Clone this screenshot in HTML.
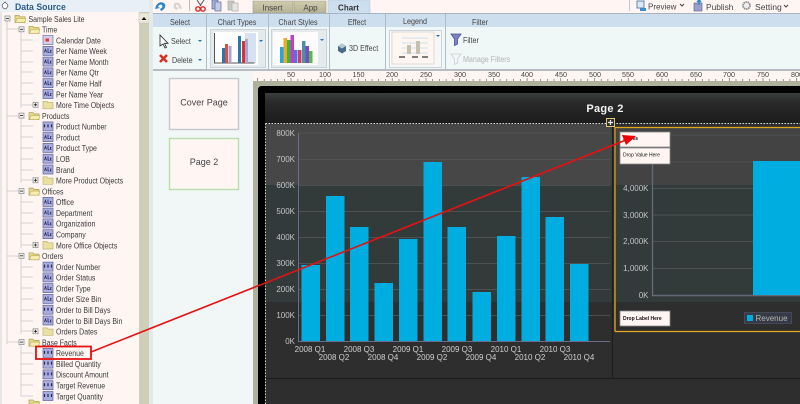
<!DOCTYPE html>
<html><head><meta charset="utf-8"><style>
html,body{margin:0;padding:0;background:#fff;width:800px;height:404px;overflow:hidden}
svg{display:block;font-family:"Liberation Sans",sans-serif;filter:blur(.25px)}
.t text{font-size:8.2px;fill:#3a3a3a}
.h{font-size:8.5px;fill:#444;text-anchor:middle}
.b{font-size:8.4px;fill:#444}
.r{font-size:7.2px;fill:#444;text-anchor:middle}
.y{font-size:8px;fill:#c4c4c4;text-anchor:end}
.x{font-size:8px;fill:#d0d0d0;text-anchor:middle}
.d{font-size:5px;fill:#111;font-weight:bold}
</style></head><body>
<svg width="800" height="404" viewBox="0 0 800 404" xmlns="http://www.w3.org/2000/svg">
<defs>
<g id="abc"><rect x="0" y="-4.500" width="10" height="9" fill="#a9aedd" stroke="#5d6399" stroke-width=".7"/><path d="M1.500 1.500l1-3 1 3M5 -2.500v4h1.500M8.500 -.5h-1v2h1" stroke="#23275e" stroke-width=".8" fill="none"/></g>
<g id="num"><rect x="0" y="-4.500" width="10" height="9" fill="#a9aedd" stroke="#5d6399" stroke-width=".7"/><path d="M1.500 -2v3M5 -2v3M8.500 -2v3" stroke="#23275e" stroke-width="1.200"/></g>
<g id="fo"><path d="M0 -3h4l1 1.300h5v5.700h-10z" fill="#e4d98c" stroke="#b0a050" stroke-width=".7"/><path d="M.5 4l1.500-4h9l-1.500 4z" fill="#f6eeb0" stroke="#b0a050" stroke-width=".5"/></g>
<g id="fc"><path d="M0 -3.500h4l1 1.300h5v6.200h-10z" fill="#e9e1a2" stroke="#bdb070" stroke-width=".7"/></g>
<g id="mi"><rect x="0" y="-2.500" width="5" height="5" fill="#f2f0ea" stroke="#888" stroke-width=".7"/><path d="M1 0h3" stroke="#222" stroke-width=".8"/></g>
<g id="pl"><rect x="0" y="-2.500" width="5" height="5" fill="#f2f0ea" stroke="#888" stroke-width=".7"/><path d="M1 0h3M2.500 -1.500v3" stroke="#222" stroke-width=".8"/></g>
<linearGradient id="hd" x1="0" y1="0" x2="0" y2="1"><stop offset="0" stop-color="#3a3f3f"/><stop offset=".3" stop-color="#2a2a2a"/><stop offset="1" stop-color="#1c1c1c"/></linearGradient>
<linearGradient id="tab" x1="0" y1="0" x2="0" y2="1"><stop offset="0" stop-color="#cfccae"/><stop offset="1" stop-color="#b6b396"/></linearGradient>
</defs>

<!-- base -->
<rect width="800" height="404" fill="#f0f6f6"/>

<!-- left panel -->
<rect x="0" y="0" width="150" height="12" fill="#e9eff6"/>
<path d="M2 5l3-3 2 2 1 2-2 3-3-1z" fill="#fff" stroke="#555" stroke-width=".7"/>
<g transform="scale(.92 1)"><text x="16.300" y="10" font-size="9.500" font-weight="bold" fill="#2b5d8c">Data Source</text></g>
<rect x="0" y="12" width="139" height="392" fill="#fff6f4"/>
<rect x="0" y="12" width="2" height="392" fill="#e6e6e6"/>
<rect x="139" y="12" width="10" height="392" fill="#cfd0bb"/>
<rect x="139" y="13" width="10" height="10" fill="#ece9d8" stroke="#bbb" stroke-width=".5"/>
<path d="M141.500 20l2.500-3 2.500 3z" fill="#111"/>
<rect x="149" y="0" width="4" height="404" fill="#e4e9ec"/>

<path d="M7 21V344M21 32V108M21 118V183M21 194V248M21 258V334M21 345V396M21 40h12M21 51h12M21 62h12M21 72h12M21 83h12M21 94h12M21 105h12M21 126h12M21 137h12M21 148h12M21 159h12M21 170h12M21 180h12M21 202h12M21 213h12M21 223h12M21 234h12M21 245h12M21 267h12M21 277h12M21 288h12M21 299h12M21 310h12M21 321h12M21 331h12M21 353h12M21 364h12M21 374h12M21 385h12M21 396h12M7 29h12M7 116h12M7 191h12M7 256h12M7 342h12" stroke="#c8c8c8" stroke-width=".8" fill="none"/>

<use href="#mi" x="5" y="18.500"/><use href="#fo" x="15" y="18.500"/>
<use href="#mi" x="19" y="29.300"/><use href="#fo" x="29" y="29.300"/>
<use href="#mi" x="19" y="115.600"/><use href="#fo" x="29" y="115.600"/>
<use href="#mi" x="19" y="191.100"/><use href="#fo" x="29" y="191.100"/>
<use href="#mi" x="19" y="255.800"/><use href="#fo" x="29" y="255.800"/>
<use href="#mi" x="19" y="342.100"/><use href="#fo" x="29" y="342.100"/>
<use href="#pl" x="33" y="104.800"/><use href="#fc" x="43" y="104.800"/>
<use href="#pl" x="33" y="180.300"/><use href="#fc" x="43" y="180.300"/>
<use href="#pl" x="33" y="245"/><use href="#fc" x="43" y="245"/>
<use href="#pl" x="33" y="331.300"/><use href="#fc" x="43" y="331.300"/>
<use href="#fo" x="29" y="403"/>

<rect x="43" y="35.500" width="10" height="9" fill="#cfd0e6" stroke="#5d6399" stroke-width=".6"/><rect x="45.500" y="38.500" width="3.500" height="3" fill="#e33"/>
<use href="#abc" x="43" y="50.900"/><use href="#abc" x="43" y="61.600"/><use href="#abc" x="43" y="72.400"/><use href="#abc" x="43" y="83.200"/><use href="#abc" x="43" y="94"/>
<use href="#num" x="43" y="126.400"/><use href="#abc" x="43" y="137.100"/><use href="#abc" x="43" y="147.900"/><use href="#abc" x="43" y="158.700"/><use href="#abc" x="43" y="169.500"/>
<use href="#abc" x="43" y="201.900"/><use href="#abc" x="43" y="212.600"/><use href="#abc" x="43" y="223.400"/><use href="#abc" x="43" y="234.200"/>
<use href="#num" x="43" y="266.600"/><use href="#abc" x="43" y="277.400"/><use href="#abc" x="43" y="288.100"/><use href="#abc" x="43" y="298.900"/><use href="#num" x="43" y="309.700"/><use href="#abc" x="43" y="320.500"/>
<use href="#num" x="43" y="352.900"/><use href="#num" x="43" y="363.600"/><use href="#num" x="43" y="374.400"/><use href="#num" x="43" y="385.200"/><use href="#num" x="43" y="396"/>

<g class="t" transform="scale(.85 1)">
<text x="33.530" y="21.800">Sample Sales Lite</text>
<text x="49.410" y="32.600">Time</text>
<text x="65.880" y="43.400">Calendar Date</text>
<text x="65.880" y="54.200">Per Name Week</text>
<text x="65.880" y="64.900">Per Name Month</text>
<text x="65.880" y="75.700">Per Name Qtr</text>
<text x="65.880" y="86.500">Per Name Half</text>
<text x="65.880" y="97.300">Per Name Year</text>
<text x="65.880" y="108.100">More Time Objects</text>
<text x="49.410" y="118.900">Products</text>
<text x="65.880" y="129.700">Product Number</text>
<text x="65.880" y="140.400">Product</text>
<text x="65.880" y="151.200">Product Type</text>
<text x="65.880" y="162">LOB</text>
<text x="65.880" y="172.800">Brand</text>
<text x="65.880" y="183.600">More Product Objects</text>
<text x="49.410" y="194.400">Offices</text>
<text x="65.880" y="205.200">Office</text>
<text x="65.880" y="215.900">Department</text>
<text x="65.880" y="226.700">Organization</text>
<text x="65.880" y="237.500">Company</text>
<text x="65.880" y="248.300">More Office Objects</text>
<text x="49.410" y="259.100">Orders</text>
<text x="65.880" y="269.900">Order Number</text>
<text x="65.880" y="280.700">Order Status</text>
<text x="65.880" y="291.400">Order Type</text>
<text x="65.880" y="302.200">Order Size Bin</text>
<text x="65.880" y="313">Order to Bill Days</text>
<text x="65.880" y="323.800">Order to Bill Days Bin</text>
<text x="65.880" y="334.600">Orders Dates</text>
<text x="49.410" y="345.400">Base Facts</text>
<text x="65.880" y="356.200">Revenue</text>
<text x="65.880" y="366.900">Billed Quantity</text>
<text x="65.880" y="377.700">Discount Amount</text>
<text x="65.880" y="388.500">Target Revenue</text>
<text x="65.880" y="399.300">Target Quantity</text>
</g>

<!-- top bar -->
<rect x="153" y="0" width="647" height="13" fill="#fff5f3"/>
<path d="M156 6c2-4 6-5 9-2 1 3-1 6-4 7l-1-2c2-1 3-2 2-4-2-1-3 0-4 2l2 1-5 1z" fill="#2a86c8"/>
<path d="M181 6c-2-4-5-4-7-2-1 3 0 5 3 6l1-2c-2-1-2-2-2-3 2-1 2 0 3 2l-1 1 4 1z" fill="#d5d5d0"/>
<path d="M189.500 0v11" stroke="#bbb"/>
<path d="M197 0l4 6M204 0l-4 6" stroke="#555" stroke-width="1"/><circle cx="198" cy="9" r="2.200" fill="none" stroke="#d22" stroke-width="1.400"/><circle cx="203" cy="9" r="2.200" fill="none" stroke="#d22" stroke-width="1.400"/>
<rect x="212" y="0" width="6" height="9" fill="#a5b1d6" stroke="#5f6a9a" stroke-width=".7"/><rect x="215" y="2" width="6" height="9" fill="#c2cbe6" stroke="#5f6a9a" stroke-width=".7"/>
<rect x="228" y="1" width="6" height="9" fill="#c8c8c4" stroke="#aaa" stroke-width=".7"/><rect x="232" y="3" width="6" height="8" fill="#e6e6e2" stroke="#aaa" stroke-width=".7"/>

<path d="M253 13V1h40v12z" fill="url(#tab)" stroke="#9c9c8c" stroke-width=".6"/>
<path d="M294 13V1h32v12z" fill="url(#tab)" stroke="#9c9c8c" stroke-width=".6"/>
<path d="M328 14V0h42v14z" fill="#cddeee" stroke="#b8c8d8" stroke-width=".6"/>
<text x="272.500" y="10.500" text-anchor="middle" style="font-size:8px;fill:#444">Insert</text>
<text x="310.500" y="10.500" text-anchor="middle" style="font-size:8px;fill:#444">App</text>
<text x="348.500" y="10.500" text-anchor="middle" font-weight="bold" style="font-size:8px;fill:#333">Chart</text>

<path d="M629.500 0v11" stroke="#c0c8d8"/>
<rect x="637" y="1" width="7" height="7" fill="#dfe8f2" stroke="#3a6ea5" stroke-width=".8"/><path d="M640 8h6v3h-6z" fill="#3a8ed0"/>
<text x="648" y="9.500" class="b" style="font-size:8px">Preview</text><path d="M680 4l2 2 2-2" stroke="#444" fill="none"/>
<rect x="694" y="3" width="8" height="8" fill="#9aa0cc" stroke="#555f90" stroke-width=".6"/><path d="M699 5V0M697 2l2-2 2 2" stroke="#2a86c8" stroke-width="1.400" fill="none"/>
<text x="706" y="10" class="b" style="font-size:8.400px">Publish</text>
<circle cx="746.500" cy="5.500" r="3.500" fill="#eee" stroke="#888" stroke-width="1.800" stroke-dasharray="1.500 .7"/>
<text x="755" y="10" class="b" style="font-size:8.600px">Setting</text><path d="M784 5l2 2 2-2" stroke="#444" fill="none"/>

<!-- ribbon -->
<rect x="153" y="13" width="647" height="1" fill="#a8b4c0"/>
<rect x="153" y="14" width="647" height="13" fill="#cddeee"/>
<rect x="153" y="27" width="647" height="42" fill="#eff8f7"/>
<rect x="153" y="69" width="647" height="2" fill="#b6bcc2"/>
<path d="M206.500 14v55M268.500 14v55M329.500 14v55M385.500 14v55M445.500 14v55" stroke="#b1bcc6" stroke-width="1"/>
<g transform="scale(.85 1)">
<text x="211.760" y="25" class="h">Select</text>
<text x="278.820" y="25" class="h">Chart Types</text>
<text x="350.590" y="25" class="h">Chart Styles</text>
<text x="420" y="25" class="h">Effect</text>
<text x="488.240" y="24" class="h">Legend</text>
<text x="564.700" y="25" class="h">Filter</text>
<text x="201.180" y="44" class="b">Select</text>
<text x="202.350" y="63" class="b">Delete</text>
<text x="410.590" y="51" class="b">3D Effect</text>
<text x="544.710" y="43" class="b">Filter</text>
<text x="544.710" y="62" class="b" style="fill:#b0b4b4">Manage Filters</text>
</g>

<path d="M160 35v11l3-2 2 4 1.500-.7-2-4h3.500z" fill="#fff" stroke="#222" stroke-width=".8"/>
<path d="M198 40h4l-2 2z" fill="#2a6fb0"/>
<path d="M160 55l7 7M167 55l-7 7" stroke="#d9331f" stroke-width="2.600"/>
<path d="M198 59h4l-2 2z" fill="#2a6fb0"/>

<!-- chart types gallery -->
<rect x="210.500" y="29.500" width="55" height="38" fill="#e4eaed" stroke="#ccd3d8"/>
<rect x="214" y="32" width="44" height="33" fill="#fff"/>
<rect x="245" y="33" width="11" height="30" fill="#d6e2f2"/>
<path d="M214.500 33v30h40" stroke="#555" fill="none"/>
<rect x="222" y="48" width="3" height="15" fill="#2578b0"/><rect x="225" y="44" width="3" height="19" fill="#d9533f"/><rect x="228.500" y="46" width="3" height="17" fill="#a6a6d6"/>
<rect x="238" y="36" width="3" height="27" fill="#2578b0"/><rect x="242" y="41" width="3" height="22" fill="#d9332f"/><rect x="245" y="39" width="3" height="24" fill="#a6a6d6"/>
<path d="M259 40h4l-2 2z" fill="#2a6fb0"/>

<rect x="271.500" y="29.500" width="55" height="38" fill="#e4eaed" stroke="#ccd3d8"/>
<rect x="273" y="32" width="45" height="33" fill="#fdfbfb"/>
<rect x="280" y="47" width="3.500" height="16" fill="#22a5e0"/><rect x="283.500" y="38" width="3.500" height="25" fill="#f2a820"/><rect x="287" y="40" width="3.500" height="23" fill="#3bb53b"/><rect x="290.500" y="35" width="3.500" height="28" fill="#c23ec8"/><rect x="294" y="50" width="3.500" height="13" fill="#5a6fd8"/><rect x="298" y="50" width="3.500" height="13" fill="#c8406a"/><rect x="302" y="41" width="3.500" height="22" fill="#4a90a8"/><rect x="305.500" y="46" width="3.500" height="17" fill="#7a4ac0"/><rect x="309" y="51" width="3.500" height="12" fill="#5cb84c"/>
<path d="M320 39h4l-2 2z" fill="#2a6fb0"/>

<path d="M338 46l4-2.500 4 2.500v5l-4 2.500-4-2.500z" fill="#4a6a8a"/><path d="M338 46l4-2.500 4 2.500-4 2.500z" fill="#b5c8d8"/>

<rect x="389.500" y="30.500" width="52" height="37" fill="#f6f8f8" stroke="#ccd3d8"/>
<rect x="392" y="32" width="42" height="32" fill="#fff6f2" stroke="#dcdcd8"/>
<path d="M402 38h26M402 43h26M402 48h26M402 53h26" stroke="#cfe0ee" stroke-width="1"/>
<rect x="407" y="45" width="4" height="9" fill="#c8c0aa"/><rect x="416" y="41" width="4" height="13" fill="#c8c0aa"/>
<path d="M399 57h6M412 57h6M422 57h6" stroke="#333" stroke-width="1.200"/>
<path d="M436 35h4l-2 2z" fill="#2a6fb0"/>

<path d="M451 34h10l-3.500 5v5l-3 1.500v-6.500z" fill="#7d82c2" stroke="#4c5190" stroke-width=".8"/>
<path d="M451 54h10l-3.500 5v4l-3 1.500v-5.500z" fill="#f4f8f6" stroke="#c8cece" stroke-width=".8"/>

<!-- page panel -->
<rect x="153" y="71" width="100" height="333" fill="#f1f6f6"/>
<rect x="169.500" y="78.500" width="69" height="51" fill="#fff6f4" stroke="#c4c8cc" stroke-width="1.400"/>
<text x="204" y="105.500" text-anchor="middle" font-size="9" fill="#444">Cover Page</text>
<rect x="169.500" y="138.500" width="69" height="51" fill="#fff6f4" stroke="#b5e0ae" stroke-width="1.400"/>
<text x="204" y="165" text-anchor="middle" font-size="9" fill="#444">Page 2</text>

<!-- ruler -->
<rect x="253" y="71" width="547" height="10" fill="#fff6f4"/>
<path d="M257.500 78v3M264.200 79v2M271 79v2M277.700 79v2M284.400 79v2M291 78v3M297.900 79v2M304.600 79v2M311.300 79v2M318 79v2M324.900 78v3M331.500 79v2M338.300 79v2M345 79v2M351.800 79v2M358.500 78v3M365.300 79v2M372 79v2M378.700 79v2M385.500 79v2M392.200 78v3M399 79v2M405.700 79v2M412.400 79v2M419.200 79v2M426 78v3M432.700 79v2M439.400 79v2M446.100 79v2M452.900 79v2M459.700 78v3M466.400 79v2M473.100 79v2M479.900 79v2M486.600 79v2M493.400 78v3M500.100 79v2M506.800 79v2M513.600 79v2M520.300 79v2M527.100 78v3M533.800 79v2M540.500 79v2M547.300 79v2M554 79v2M560.800 78v3M567.500 79v2M574.200 79v2M581 79v2M587.700 79v2M594.500 78v3M601.200 79v2M607.900 79v2M614.700 79v2M621.400 79v2M628.200 78v3M634.900 79v2M641.600 79v2M648.400 79v2M655.100 79v2M661.900 78v3M668.600 79v2M675.300 79v2M682.100 79v2M688.800 79v2M695.600 78v3M702.300 79v2M709 79v2M715.800 79v2M722.500 79v2M729.300 78v3M736 79v2M742.700 79v2M749.500 79v2M756.200 79v2M763 78v3M769.700 79v2M776.400 79v2M783.200 79v2M789.900 79v2M796.700 78v3" stroke="#666" stroke-width=".7"/>
<g class="r"><text x="291" y="77">50</text><text x="325" y="77">100</text><text x="358.500" y="77">150</text><text x="392" y="77">200</text><text x="426" y="77">250</text><text x="460" y="77">300</text><text x="494" y="77">350</text><text x="527" y="77">400</text><text x="561" y="77">450</text><text x="595" y="77">500</text><text x="628" y="77">550</text><text x="662" y="77">600</text><text x="696" y="77">650</text><text x="729" y="77">700</text><text x="763" y="77">750</text><text x="797" y="77">800</text></g>

<!-- stage -->
<rect x="253" y="81" width="547" height="323" fill="#aeb29c"/>
<path d="M800 86H262q-4 0-4 4V404H800z" fill="#000"/>
<rect x="265" y="93" width="535" height="311" fill="#2e2e2e"/>
<rect x="265" y="93" width="535" height="30" fill="url(#hd)"/>
<text x="605" y="112" text-anchor="middle" font-size="11" font-weight="bold" fill="#f2f2f2" letter-spacing=".3">Page 2</text>

<!-- chart 1 bg -->
<rect x="266" y="124" width="346" height="61" fill="#474747"/>
<rect x="266" y="185" width="346" height="117" fill="#323a3a"/>
<rect x="266" y="302" width="346" height="76" fill="#2e2e2e"/>
<path d="M265.500 123.500H800" stroke="#ddd" stroke-dasharray="1.500 1.500" stroke-width="1"/>
<path d="M265.500 123.500V404" stroke="#ccc" stroke-dasharray="1.500 1.500" stroke-width="1"/>
<path d="M266 378.500H800M612.500 124V378" stroke="#1e1e1e" stroke-width="1.200"/>

<path d="M298 133H610M298 159.500H610M298 185.500H610M298 211.500H610M298 237.500H610M298 263.500H610M298 289.500H610M298 315.500H610" stroke="#555a5a" stroke-width=".8"/>
<path d="M298.500 133V341.500H610" stroke="#6a6d8a" stroke-width="1" fill="none"/>
<g fill="#00ade0">
<rect x="301.500" y="265" width="18.500" height="76"/>
<rect x="326" y="196" width="18.500" height="145"/>
<rect x="350" y="227" width="18.500" height="114"/>
<rect x="374.500" y="283" width="18.500" height="58"/>
<rect x="399" y="239" width="18.500" height="102"/>
<rect x="423.500" y="162" width="18.500" height="179"/>
<rect x="447.500" y="227" width="18.500" height="114"/>
<rect x="472.500" y="292" width="18.500" height="49"/>
<rect x="497" y="236" width="18.500" height="105"/>
<rect x="521.500" y="177" width="18.500" height="164"/>
<rect x="545.500" y="217" width="18.500" height="124"/>
<rect x="570" y="264" width="18.500" height="77"/>
</g>
<g class="y">
<text x="295" y="136">800K</text><text x="295" y="162">700K</text><text x="295" y="188">600K</text><text x="295" y="214">500K</text><text x="295" y="240">400K</text><text x="295" y="266">300K</text><text x="295" y="292">200K</text><text x="295" y="318">100K</text><text x="295" y="344">0K</text>
</g>
<g class="x">
<text x="310" y="352">2008 Q1</text><text x="334" y="360">2008 Q2</text>
<text x="359" y="352">2008 Q3</text><text x="383" y="360">2008 Q4</text>
<text x="408" y="352">2009 Q1</text><text x="432" y="360">2009 Q2</text>
<text x="457" y="352">2009 Q3</text><text x="481" y="360">2009 Q4</text>
<text x="506" y="352">2010 Q1</text><text x="530" y="360">2010 Q2</text>
<text x="555" y="352">2010 Q3</text><text x="579" y="360">2010 Q4</text>
</g>

<!-- chart 2 -->
<rect x="616" y="128" width="184" height="57" fill="#434343"/>
<rect x="616" y="185" width="184" height="117" fill="#323a3a"/>
<rect x="616" y="302" width="184" height="29" fill="#2e2e2e"/>
<path d="M652 135H800M652 162H800M652 188.500H800M652 215H800M652 241.500H800M652 268.500H800" stroke="#4c5252" stroke-width="1"/>
<path d="M652.500 160V295.500H800" stroke="#626a78" stroke-width="1.400" fill="none"/>
<rect x="753" y="161" width="47" height="134" fill="#00ade0"/>
<g class="y"><text x="648.500" y="191">4,000K</text><text x="648.500" y="218">3,000K</text><text x="648.500" y="244">2,000K</text><text x="648.500" y="271">1,000K</text><text x="648.500" y="298">0K</text></g>
<path d="M615 331.500V127.500H800M615 331.500H800" stroke="#e2a91e" stroke-width="1.300" fill="none"/>
<rect x="620" y="132" width="50" height="15" fill="#fff6f4" stroke="#888" stroke-width=".8"/>
<rect x="620" y="148" width="50" height="16" fill="#fff6f4" stroke="#888" stroke-width=".8"/>
<rect x="620" y="311" width="50" height="15" fill="#fff6f4" stroke="#888" stroke-width=".8"/>
<text x="623" y="140" class="d">Series</text>
<text x="623" y="156.500" class="d" style="font-weight:normal">Drop Value Here</text>
<text x="623" y="320" class="d">Drop Label Here</text>
<rect x="744.500" y="312.500" width="47" height="11" fill="#363a44" stroke="#44485a"/>
<rect x="747" y="315" width="6" height="6" fill="#00ade0"/>
<text x="755.500" y="321" font-size="8" fill="#b5b5b5">Revenue</text>

<rect x="606.500" y="118.500" width="8" height="8" fill="#2e2e2e" stroke="#e2c87a" stroke-width="1"/>
<path d="M610.500 120v5M608 122.500h5" stroke="#eee" stroke-width="1.200"/>

<!-- annotation -->
<rect x="36" y="346.500" width="55" height="12.500" fill="none" stroke="#e81010" stroke-width="1.800"/>
<path d="M91 352L625 140.400" stroke="#e81010" stroke-width="1.600"/>
<path d="M636 136L622 135L626 145z" fill="#f00000"/>
</svg>
</body></html>
